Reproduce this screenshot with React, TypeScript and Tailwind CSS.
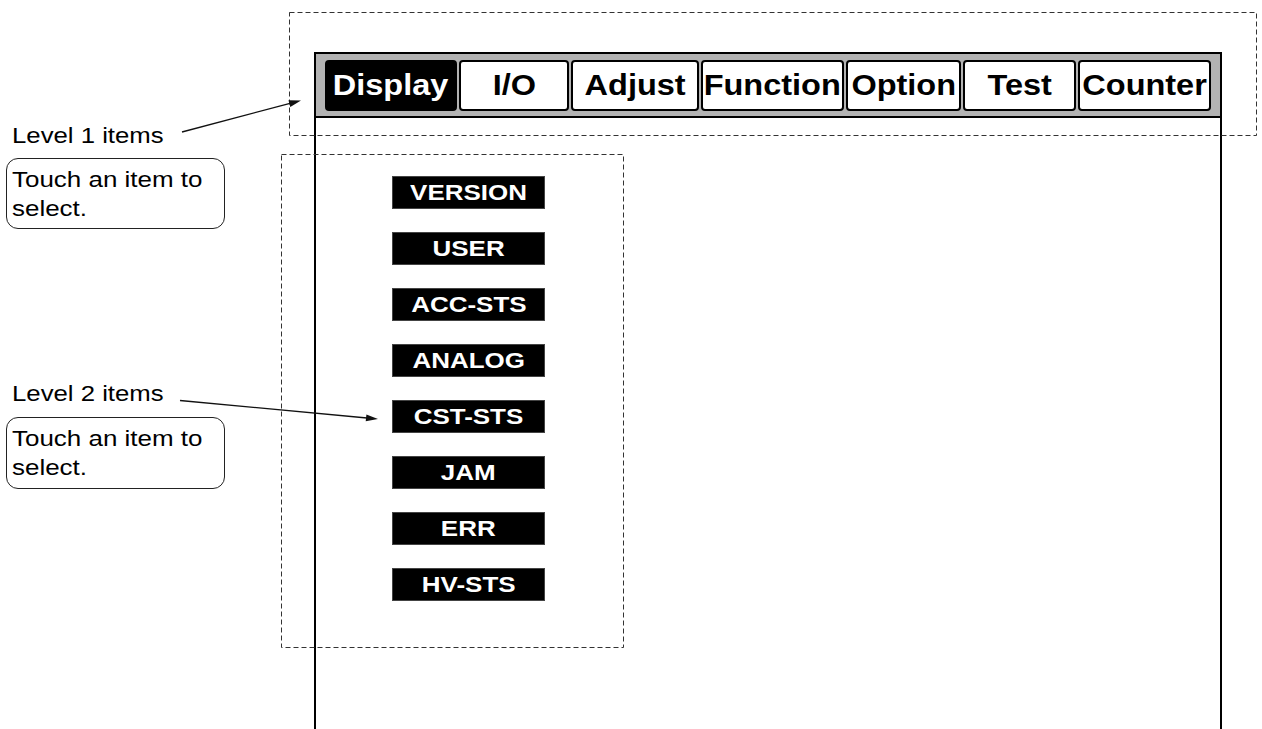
// Touch-panel menu diagram: the device screen with its level 1 tab strip and
// level 2 item list, plus the callout labels, dashed highlight boxes and arrows.

const TABS = [
  { label: "Display", w: "w-[132px]", active: true },
  { label: "I/O", w: "w-[110px]" },
  { label: "Adjust", w: "w-[128px]" },
  { label: "Function", w: "w-[143px]" },
  { label: "Option", w: "w-[115px]" },
  { label: "Test", w: "w-[113px]" },
  { label: "Counter", w: "w-[133px]" },
];

const ITEMS = ["VERSION", "USER", "ACC-STS", "ANALOG", "CST-STS", "JAM", "ERR", "HV-STS"];

function Callout({ label, top, boxTop, boxH }: { label: string; top: string; boxTop: string; boxH: string }) {
  return (
    <div className={`flex flex-col ${top}`}>
      <div className="pl-[6px] text-[22px] leading-[26px] text-black whitespace-nowrap">
        <span className="inline-block origin-left scale-x-[1.17]">{label}</span>
      </div>
      <div
        className={`${boxTop} ${boxH} w-[219px] border border-[#222] rounded-[12px] pl-[5px] pt-[6px] text-[22px] leading-[29px] text-black whitespace-nowrap`}
      >
        <div>
          <span className="inline-block origin-left scale-x-[1.18]">Touch an item to</span>
        </div>
        <div>
          <span className="inline-block origin-left scale-x-[1.18]">select.</span>
        </div>
      </div>
    </div>
  );
}

export default function App() {
  return (
    <div className="relative w-[1262px] h-[729px] overflow-hidden bg-white font-['Liberation_Sans',Arial,sans-serif]">
      <div className="flex h-full">
        {/* callout column */}
        <div className="w-[314px] shrink-0 pl-[6px] flex flex-col">
          <Callout label="Level 1 items" top="mt-[123px]" boxTop="mt-[9px]" boxH="h-[71px]" />
          <Callout label="Level 2 items" top="mt-[152px]" boxTop="mt-[10px]" boxH="h-[72px]" />
        </div>

        {/* device screen */}
        <div className="mt-[52px] w-[908px] shrink-0 border-2 border-b-0 border-black flex flex-col">
          <div className="h-[64px] bg-[#b3b3b3] border-b-2 border-black flex items-start gap-[2px] pl-[9px] pt-[6px]">
            {TABS.map((t) => (
              <div
                key={t.label}
                className={`${t.w} h-[51px] shrink-0 rounded-[4px] border-2 border-black flex items-center justify-center text-[29px] font-bold whitespace-nowrap ${
                  t.active ? "bg-black text-white" : "bg-white text-black"
                }`}
              >
                <span className="inline-block scale-x-[1.12]">{t.label}</span>
              </div>
            ))}
          </div>
          <div className="flex flex-col gap-[23px] pl-[76px] pt-[58px]">
            {ITEMS.map((it) => (
              <div
                key={it}
                className="w-[153px] h-[33px] bg-black border border-[#444] flex items-center justify-center text-white text-[22px] font-bold leading-none"
              >
                <span className="inline-block scale-x-[1.18]">{it}</span>
              </div>
            ))}
          </div>
        </div>
      </div>

      {/* dashed highlight boxes and arrows */}
      <svg className="absolute inset-0 pointer-events-none" width="1262" height="729" viewBox="0 0 1262 729">
        <rect x="289.5" y="12.5" width="967" height="123" fill="none" stroke="#333" strokeWidth="1" strokeDasharray="5 3" />
        <rect x="281.5" y="154.5" width="342" height="493" fill="none" stroke="#333" strokeWidth="1" strokeDasharray="5 3" />
        <line x1="182" y1="132" x2="290" y2="103.4" stroke="#111" strokeWidth="1.3" />
        <polygon points="301,100.5 290.3,107 288.5,100.2" fill="#111" />
        <line x1="180" y1="400.5" x2="367" y2="418" stroke="#111" strokeWidth="1.3" />
        <polygon points="378,419 365.7,421.3 366.4,414.4" fill="#111" />
      </svg>
    </div>
  );
}
